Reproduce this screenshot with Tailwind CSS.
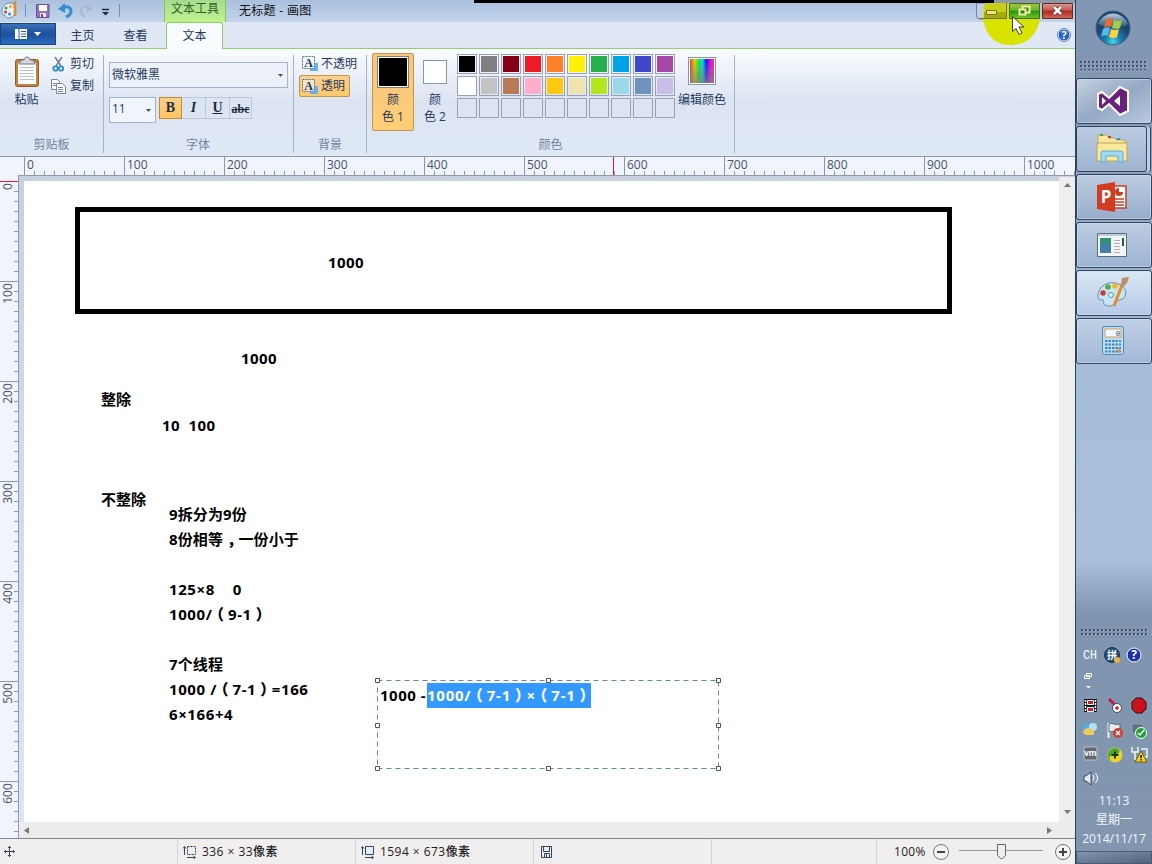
<!DOCTYPE html>
<html lang="zh-CN">
<head>
<meta charset="utf-8">
<title>无标题 - 画图</title>
<script src="https://cdn.jsdelivr.net/npm/@tailwindcss/browser@4"></script>
</head>
<body class="w-[1152px] h-[864px] overflow-hidden flex font-['Open_Sans','Noto_Sans_CJK_SC',sans-serif] text-[12px] text-[#26395c] leading-4">

<main class="relative w-[1075px] h-full flex flex-col shrink-0 bg-[#dde6f3]">
  <!-- Title bar -->
  <header class="h-[22px] shrink-0 flex bg-linear-to-b from-[#a9c0de] to-[#c3d5ea]">
    <div class="w-[164px] shrink-0">
      <svg width="164" height="22" fill="none">
        <path d="M2 11c0-5 4-8 8-8 3 0 5 2 4 4-1 1 2 2 2 4 0 4-4 7-8 7-3 0-2-3-4-3S2 13 2 11z" fill="#e4f0f7" stroke="#5b93ad"/>
        <circle cx="6" cy="8" r="1.5" fill="#4a9b46"/><circle cx="10.500" cy="6.500" r="1.500" fill="#e7ab31"/><circle cx="5.500" cy="12" r="1.500" fill="#c23f49"/><circle cx="9.500" cy="14" r="1.500" fill="#3b87c7"/>
        <path d="M15 1v15" stroke="#e28a2c" stroke-width="2.500"/>
        <path d="M25.500 4v13M119.500 4v13" stroke="#7890b0"/>
        <path d="M36.500 4.500h12.500v13H36.500z" fill="#9474b8" stroke="#6c4f93"/><path d="M39 5h8v6h-8z" fill="#fff"/><path d="M40 13h6v4h-6z" fill="#e9e3f3"/><path d="M41 14h2v3h-2z" fill="#6c4f93"/>
        <path d="M62 8c6-3 9 0 9 3s-2 5-5 6" stroke="#368dd0" stroke-width="3"/><path d="M58 9l7-6v10z" fill="#368dd0"/>
        <path d="M89 8c-6-3-8 0-8 3s2 5 4 6" stroke="#a9bad0" stroke-width="2.500"/><path d="M93 9l-6-6v9z" fill="#a9bad0"/>
        <path d="M102 9.500h7" stroke="#1f2a3c" stroke-width="1.500"/><path d="M102 12h7l-3.500 3.500z" fill="#1f2a3c"/>
      </svg>
    </div>
    <div class="w-[62px] h-[22px] flex justify-center pt-[1px] border-x border-[#87c559] bg-linear-to-b from-[#a4dc8c] to-[#c0f28e] text-[#35602f] whitespace-nowrap">文本工具</div>
    <div class="pl-[13px] pt-[3px] text-[#111] whitespace-nowrap tracking-[0.300px]">无标题 - 画图</div>
  </header>
  <!-- Tabs -->
  <nav class="h-[27px] shrink-0 flex border-b border-[#93d16b] bg-[#dfe8f4] text-[12px]">
    <div class="w-[56px] h-[22px] mt-px flex items-center justify-center bg-linear-to-b from-[#3a72b8] via-[#1d509b] to-[#2a6bbd] border border-[#1a4382]">
      <svg width="28" height="12"><path d="M1 1h12v10H1z" fill="#fff"/><path d="M5 1v10M7 3.500h5M7 6h5M7 8.500h5" stroke="#2a5ca5"/><path d="M20 4h7l-3.500 4z" fill="#fff"/></svg>
    </div>
    <div class="w-[53px] pt-[6px] text-center">主页</div>
    <div class="w-[53px] pt-[6px] text-center">查看</div>
    <div class="ml-[4px] w-[57px] h-[27px] pt-[5px] text-center rounded-t-[3px] border border-b-0 border-[#8bcb60] bg-[#f9fcfe]">文本</div>
    <div class="grow flex justify-end pt-[6px] pr-[4px]">
      <svg width="14" height="14"><circle cx="7" cy="7" r="6" fill="#2b63c6" stroke="#fff"/><circle cx="7" cy="7" r="6.500" fill="none" stroke="#6085bf"/><text x="7" y="11" text-anchor="middle" font-size="11" font-weight="700" fill="#fff">?</text></svg>
    </div>
  </nav>
  <!-- Ribbon -->
  <section class="h-[107px] shrink-0 flex bg-linear-to-b from-[#f9fcfe] via-[#dce4f2] to-[#dfe8f5] border-b border-[#dfe9f6]">
    <div class="w-[104px] h-[98px] mt-[6px] border-r border-[#a7b4c8] flex flex-col justify-between">
      <div class="flex">
        <div class="w-[51px] flex flex-col items-center pl-[2px]">
          <svg width="26" height="34" class="mt-[1px]" fill="none"><rect x="1.500" y="3.500" width="23" height="27" rx="2" fill="#bf8340" stroke="#925c27"/><path d="M4 7h18v21H4z" fill="#fdfdfd"/><path d="M7 4h3c0-4 6-4 6 0h3l2 4H5z" fill="#d4d8dd" stroke="#73787f"/><path d="M6 11.500h14M6 14.500h14M6 17.500h14M6 20.500h14M6 23.500h14" stroke="#b9bfc8"/></svg>
          <div class="mt-[2px]">粘贴</div>
        </div>
        <div class="flex flex-col gap-[6px] pt-px">
          <div class="flex gap-[3px] items-center"><svg width="16" height="16" fill="none"><path d="M4 1l6 9M11 1L5 10" stroke="#6c8097" stroke-width="1.500"/><circle cx="4.500" cy="12.500" r="2.200" stroke="#2f8bc7" stroke-width="1.800"/><circle cx="10" cy="12.500" r="2.200" stroke="#2f8bc7" stroke-width="1.800"/></svg>剪切</div>
          <div class="flex gap-[3px] items-center"><svg width="16" height="16" fill="#fff" stroke="#75889f"><path d="M.5 1.500h6l2 2v8h-8z"/><path d="M2 5.500h4M2 7.500h4"/><path d="M5.500 5.500h6l3 3v7h-9z"/><path d="M7 9.500h5M7 11.500h5M7 13.500h5"/></svg>复制</div>
        </div>
      </div>
      <div class="text-center text-[#7484a1]">剪贴板</div>
    </div>
    <div class="w-[190px] h-[98px] mt-[6px] border-r border-[#a7b4c8] flex flex-col pl-[5px]">
      <div class="mt-[7px] w-[179px] h-[26px] border border-[#a2b4cf] bg-[#edf2fa] flex items-center justify-between pl-[2px] pr-[4px]"><span class="-mt-px">微软雅黑</span><svg width="5" height="3"><path d="M0 0h5l-2.500 3z" fill="#45526a"/></svg></div>
      <div class="flex mt-[9px]">
        <div class="w-[47px] h-[26px] border border-[#a2b4cf] bg-[#f0f4fb] flex items-center justify-between pl-[3px] pr-[4px]"><span class="-mt-[2px] -ml-px">11</span><svg width="5" height="3"><path d="M0 0h5l-2.500 3z" fill="#45526a"/></svg></div>
        <div class="ml-[3px] flex h-[22px] font-['Liberation_Serif',serif] font-bold text-[14px] leading-[19px] text-center text-[#1d2b42]">
          <div class="w-[23px] border border-[#bd8e3a] bg-linear-to-b from-[#fbd08a] to-[#ffc65e]">B</div>
          <div class="w-[24px] border-y border-r border-[#bbc8dd] italic">I</div>
          <div class="w-[24px] border-y border-r border-[#bbc8dd] underline">U</div>
          <div class="w-[22px] border-y border-r border-[#bbc8dd] line-through text-[12px] leading-[22px]">abc</div>
        </div>
      </div>
      <div class="mt-auto pr-[6px] text-center text-[#7484a1]">字体</div>
    </div>
    <div class="w-[73px] h-[98px] mt-[6px] border-r border-[#a7b4c8] flex flex-col pl-[5px]">
      <div class="h-[20px] w-[62px] flex items-center gap-[3px] pl-[3px] pb-[3px] whitespace-nowrap"><svg width="16" height="15" class="shrink-0"><path d="M8 7h8v8H8z" fill="#65b3f5"/><path d="M.5.500h12v12H.5z" fill="#f5f9fd" stroke="#56729a" stroke-dasharray="2 1"/><text x="6.500" y="11" text-anchor="middle" font-family="Liberation Serif" font-size="12" font-weight="700" fill="#1d3557">A</text></svg>不透明</div>
      <div class="h-[22px] w-[51px] flex items-center gap-[3px] pl-[2px] rounded-[2px] border border-[#c2964b] bg-linear-to-b from-[#fad18f] to-[#ffc86b] whitespace-nowrap"><svg width="16" height="15" class="shrink-0"><path d="M8 7h8v8H8z" fill="#65b3f5"/><path d="M.5.500h12v12H.5z" fill="#f5e6c8" stroke="#56729a" stroke-dasharray="2 1"/><text x="6.500" y="11" text-anchor="middle" font-family="Liberation Serif" font-size="12" font-weight="700" fill="#1d3557">A</text></svg>透明</div>
      <div class="mt-auto pr-[5px] text-center text-[#7484a1]">背景</div>
    </div>
    <div class="w-[368px] h-[98px] mt-[6px] border-r border-[#a7b4c8] flex flex-col">
      <div class="flex pl-[5px]">
        <div class="-mt-[2px] w-[42px] h-[78px] rounded-[2px] border border-[#c2964b] bg-linear-to-b from-[#f5c581] to-[#ffcf76] flex flex-col items-center pt-[2px]">
          <div class="size-[32px] border border-[#8d7960] bg-white p-[1px]"><div class="size-full bg-black"></div></div>
          <div class="text-center leading-[17px] mt-[3px]">颜<br>色 1</div>
        </div>
        <div class="w-[42px] flex flex-col items-center pt-[5px]">
          <div class="size-[24px] border border-[#8896ab] bg-white"></div>
          <div class="text-center leading-[17px] mt-[7px]">颜<br>色 2</div>
        </div>
        <div class="grid grid-cols-10 gap-[2px] self-start -mt-px ml-[1px] *:size-[20px] *:border *:border-[#99a2b3]">
          <i class="bg-black bg-clip-content p-px"></i><i class="bg-[#7f7f7f] bg-clip-content p-px"></i><i class="bg-[#880015] bg-clip-content p-px"></i><i class="bg-[#ed1c24] bg-clip-content p-px"></i><i class="bg-[#ff7f27] bg-clip-content p-px"></i><i class="bg-[#fff200] bg-clip-content p-px"></i><i class="bg-[#22b14c] bg-clip-content p-px"></i><i class="bg-[#00a2e8] bg-clip-content p-px"></i><i class="bg-[#3f48cc] bg-clip-content p-px"></i><i class="bg-[#a349a4] bg-clip-content p-px"></i>
          <i class="bg-white"></i><i class="bg-[#c3c3c3] bg-clip-content p-px"></i><i class="bg-[#b97a57] bg-clip-content p-px"></i><i class="bg-[#ffaec9] bg-clip-content p-px"></i><i class="bg-[#ffc90e] bg-clip-content p-px"></i><i class="bg-[#efe4b0] bg-clip-content p-px"></i><i class="bg-[#b5e61d] bg-clip-content p-px"></i><i class="bg-[#99d9ea] bg-clip-content p-px"></i><i class="bg-[#7092be] bg-clip-content p-px"></i><i class="bg-[#c8bfe7] bg-clip-content p-px"></i>
          <i></i><i></i><i></i><i></i><i></i><i></i><i></i><i></i><i></i><i></i>
        </div>
        <div class="w-[54px] flex flex-col items-center pt-[2px] whitespace-nowrap">
          <div class="size-[28px] border border-[#8896ab] bg-white p-px"><div class="size-full bg-[linear-gradient(to_bottom,transparent,#808080c0),linear-gradient(to_right,#f33,#dd0_20%,#0e3_38%,#0de_52%,#11f_68%,#e0e_85%,#f36)]"></div></div>
          <div class="mt-[7px]">编辑颜色</div>
        </div>
      </div>
      <div class="mt-auto text-center text-[#7484a1]">颜色</div>
    </div>
  </section>
  <!-- Horizontal ruler -->
  <svg class="h-[20px] w-full shrink-0 bg-[#f1f5fb]" font-family="Open Sans" font-size="12" fill="#44546f">
    <defs><pattern id="hx" x="24" y="0" width="10" height="20" patternUnits="userSpaceOnUse"><path d="M.5 15v4" stroke="#8a97ad"/></pattern><pattern id="hm" x="24" y="0" width="100" height="20" patternUnits="userSpaceOnUse"><path d="M.5 1v18" stroke="#8a97ad"/></pattern></defs>
    <rect x="24" width="1051" height="20" fill="url(#hx)"/><rect x="24" width="1051" height="20" fill="url(#hm)"/>
    <path d="M0 .5h1075M18 19.500h1057" stroke="#8f9bb0"/><rect x="613" y="1" width="1" height="18" fill="#d11d36"/>
    <text x="27" y="13">0</text><text x="127" y="13">100</text><text x="227" y="13">200</text><text x="327" y="13">300</text><text x="427" y="13">400</text><text x="527" y="13">500</text><text x="627" y="13">600</text><text x="727" y="13">700</text><text x="827" y="13">800</text><text x="927" y="13">900</text><text x="1027" y="13">1000</text>
  </svg>
  <!-- Work area -->
  <section class="h-[662px] shrink-0 flex">
    <svg class="w-[19px] h-full shrink-0 bg-[#f1f5fb]" font-family="Open Sans" font-size="12" fill="#44546f" text-anchor="middle">
      <defs><pattern id="vx" x="0" y="5" width="19" height="10" patternUnits="userSpaceOnUse"><path d="M14 .5h4" stroke="#8a97ad"/></pattern><pattern id="vm" x="0" y="5" width="19" height="100" patternUnits="userSpaceOnUse"><path d="M0 .5h18" stroke="#8a97ad"/></pattern></defs>
      <rect y="5" width="19" height="657" fill="url(#vx)"/><rect y="5" width="19" height="657" fill="url(#vm)"/>
      <path d="M18.500 0v662" stroke="#8f9bb0"/><rect y="5" width="18" height="1" fill="#d11d36"/>
      <text transform="translate(12 10.500) rotate(-90)">0</text><text transform="translate(12 117.500) rotate(-90)">100</text><text transform="translate(12 217.500) rotate(-90)">200</text><text transform="translate(12 317.500) rotate(-90)">300</text><text transform="translate(12 417.500) rotate(-90)">400</text><text transform="translate(12 517.500) rotate(-90)">500</text><text transform="translate(12 617.500) rotate(-90)">600</text>
    </svg>
    <div class="w-[1056px] flex flex-col bg-linear-to-b from-[#c8d0df] to-[#dfe5f4]">
      <div class="h-[646px] flex">
        <!-- Drawing canvas: texts and shapes sit at free positions; punctuation is centred in its full-width cell -->
        <div class="relative ml-[5px] mt-[5px] w-[1035px] bg-white font-bold text-[15px] leading-[25px] tracking-[0.400px] text-black whitespace-pre [&_b]:inline-block [&_b]:w-[15.5px] [&_b]:text-center [&_b]:tracking-normal [&_b]:[font-feature-settings:'halt']">
          <div class="absolute left-[51px] top-[26px] w-[877px] h-[107px] border-5 border-black"></div>
          <div class="absolute left-[304px] top-[69px]">1000</div>
          <div class="absolute left-[217px] top-[165px]">1000</div>
          <div class="absolute left-[77px] top-[206px] tracking-normal">整除</div>
          <div class="absolute left-[138px] top-[232px]">10  100</div>
          <div class="absolute left-[77px] top-[306px] tracking-normal">不整除</div>
          <div class="absolute left-[145px] top-[321px] tracking-[0.100px]">9拆分为9份
8份相等<b>，</b>一份小于

<span class="tracking-[0.600px]">125×8    0
1000/<b>（</b>9-1<b>）</b></span>

7个线程
<span class="tracking-[0.600px]">1000 /<b>（</b>7-1<b>）</b>=166
6×166+4</span></div>
          <div class="absolute left-[353px] top-[499px] w-[342px] h-[89px] whitespace-normal">
            <svg class="absolute inset-0" width="342" height="89" fill="none"><path d="M.5.500h341v88H.5z" stroke="#5c88b2" stroke-dasharray="5 4"/></svg>
            <div class="flex pl-[3px] pt-[3px] relative whitespace-pre"><span class="w-[47px] tracking-[0.500px]">1000 -</span><span class="bg-[#3399ff] text-white w-[164px] h-[25px] tracking-[0.750px]">1000/<b>（</b>7-1<b>）</b>×<b>（</b>7-1<b>）</b></span></div>
            <svg class="absolute -left-[2px] -top-[2px]" width="346" height="93" fill="#fff" stroke="#4c5663"><path d="M.5.500h4v4h-4zM171.500.500h4v4h-4zM341.500.500h4v4h-4zM.5 45.500h4v4h-4zM341.500 45.500h4v4h-4zM.5 88.500h4v4h-4zM171.500 88.500h4v4h-4zM341.500 88.500h4v4h-4z"/></svg>
          </div>
        </div>
        <div class="w-[16px] mt-px bg-[#eeeeef] flex flex-col justify-between items-center pt-[6px] pb-[8px]">
          <svg width="7" height="4"><path d="M0 4h7L3.500 0z" fill="#777"/></svg><svg width="7" height="4"><path d="M0 0h7L3.500 4z" fill="#777"/></svg>
        </div>
      </div>
      <div class="h-[16px] bg-[#ececec] flex justify-between items-center pl-[5px] pr-[23px]">
        <svg width="5" height="7"><path d="M5 0v7L0 3.500z" fill="#777"/></svg><svg width="5" height="7"><path d="M0 0v7l5-3.500z" fill="#777"/></svg>
      </div>
    </div>
  </section>
  <!-- Status bar -->
  <footer class="h-[26px] shrink-0 flex border-t border-[#83878c] bg-[#f0eeee] text-[#1c1c1c] whitespace-nowrap *:border-r *:border-[#d4d4d6] *:flex *:items-center">
    <div class="w-[178px] pl-[4px]"><svg width="11" height="11" fill="none" stroke="#31475f"><path d="M5.500 0v11M0 5.500h11M4 2l1.500-1.500L7 2M4 9l1.500 1.500L7 9M2 4L.5 5.500 2 7M9 4l1.500 1.500L9 7"/></svg></div>
    <div class="w-[178px] pl-[5px] gap-[5px] tracking-[0.450px]"><svg width="14" height="14" fill="none" stroke="#31475f"><path d="M4.500 1.500h8v8h-8z" stroke-dasharray="2 1"/><path d="M1.500 2v8M0 3.500l1.500-2 1.500 2M4 12.500h8M10.500 11l2 1.500-2 1.500"/></svg><span>336 × 33<span class="font-medium">像素</span></span></div>
    <div class="w-[178px] pl-[5px] gap-[5px] tracking-[0.450px]"><svg width="14" height="14" fill="none" stroke="#31475f"><path d="M4.500 1.500h8v8h-8z" fill="#e3effc"/><path d="M1.500 2v8M0 3.500l1.500-2 1.500 2M4 12.500h8M10.500 11l2 1.500-2 1.500"/></svg><span>1594 × 673<span class="font-medium">像素</span></span></div>
    <div class="w-[178px] pl-[7px]"><svg width="12" height="12" fill="none" stroke="#31475f"><path d="M.5.500h10v11h-10zM2.500.500v5h6v-5M3.500 11.500v-4h5v4M5.500 8v3"/></svg></div>
    <div class="w-[165px]"></div>
    <div class="w-[198px] border-r-0! pl-[17px]"><span class="w-[38px] shrink-0 tracking-[0.300px]">100%</span>
      <svg width="140" height="22" fill="none"><circle cx="9" cy="11" r="7.500" fill="#f3f3f3" stroke="#777"/><path d="M5 11h8" stroke="#444" stroke-width="2"/><path d="M27 9.500h84" stroke="#999"/><path d="M65.500 3.500h8v11l-3 3h-2l-3-3z" fill="#eee" stroke="#666"/><circle cx="131" cy="11" r="7.500" fill="#f3f3f3" stroke="#777"/><path d="M127 11h8M131 7v8" stroke="#444" stroke-width="2"/></svg>
    </div>
  </footer>

  <!-- Window buttons, pointer highlight and pointer -->
  <svg class="absolute left-[970px] top-0" width="105" height="48" fill="none">
    <defs><linearGradient id="rd" x2="0" y2="1"><stop stop-color="#d99a92"/><stop offset=".45" stop-color="#c6584d"/><stop offset=".5" stop-color="#ab2a20"/><stop offset="1" stop-color="#cf6958"/></linearGradient><linearGradient id="gn" x2="0" y2="1"><stop stop-color="#a6c43a"/><stop offset=".45" stop-color="#66b52a"/><stop offset=".5" stop-color="#239313"/><stop offset="1" stop-color="#73c91f"/></linearGradient></defs>
    <path d="M6.500 3v13q0 3 3 3h27V3z" fill="#bfd0e4" stroke="#71839e"/>
    <path d="M15 3C10 17 14 45 41 45S73 18 69 3z" fill="#d8e400"/>
    <path d="M15 3h22v15H14z" fill="#c7cf1a"/><path d="M14 12h22v6H14z" fill="#a5ac13"/><path d="M36.500 3v15.500h-27" stroke="#6d741c"/>
    <path d="M39.500 3.500h30v15h-30z" fill="url(#gn)" stroke="#3c6b24"/>
    <path d="M72.500 3.500h30v15h-30z" fill="url(#rd)" stroke="#6b2822"/>
    <path d="M16.500 10.500h10v4h-10z" fill="#ece96d" stroke="#777a20"/>
    <path d="M52.500 6.500h7v6h-7z" fill="#357c18" stroke="#eff0a1" stroke-width="2"/><path d="M49.500 9.500h6v5h-6z" fill="#357c18" stroke="#eff0a1" stroke-width="2"/>
    <path d="M84 7l7 7M91 7l-7 7" stroke="#6b2822" stroke-width="4"/><path d="M84 7l7 7M91 7l-7 7" stroke="#fff" stroke-width="2.500"/>
    <path d="M42.500 16.500v15l3.500-3 3 6 3-1.500-3-6h5z" fill="#fff" stroke="#3d4517"/>
  </svg>
  <div class="absolute left-[474px] top-0 w-[520px] h-[3px] bg-black"></div>
  <div class="absolute left-[994px] top-0 w-[81px] h-[3px] bg-[#8b9aa6]"></div>
</main>

<!-- Taskbar -->
<aside class="w-[77px] h-full shrink-0 flex flex-col border-l border-[#2c4059] bg-[linear-gradient(to_bottom,#8197b3_0,#8197b3_80px,#a5bcda_360px,#a9bfdd_560px,#7f94ae_615px,#8297af_850px)]">
  <div class="h-[78px] flex flex-col">
    <svg width="76" height="78">
      <defs><radialGradient id="orb" cy=".9"><stop stop-color="#49d5ef"/><stop offset=".45" stop-color="#1c7fae"/><stop offset="1" stop-color="#1b4873"/></radialGradient><linearGradient id="gl" x2="0" y2="1"><stop stop-color="#e6eff5" stop-opacity=".8"/><stop offset="1" stop-color="#b0d0e0" stop-opacity=".1"/></linearGradient>
      <pattern id="dots" width="4" height="4" patternUnits="userSpaceOnUse"><path d="M0 1h2v2H0z" fill="#3f5067"/><path d="M2 2h1v1H2z" fill="#c1cede"/></pattern></defs>
      <circle cx="37" cy="28" r="17" fill="url(#orb)" stroke="#405f7d"/><path d="M22 24a16 16 0 0 1 30 0c-9 5-21 5-30 0z" fill="url(#gl)"/>
      <g transform="translate(1 0)"><path d="M29 20q4-3 7-1l-2 8q-4-2-7 1z" fill="#ee6a2c"/><path d="M37 20q4 2 8 0l-2 8q-4 2-8 0z" fill="#a2ce43"/><path d="M26 29q4-3 7-1l-2 8q-4-2-7 1z" fill="#55b9ed"/><path d="M34 29q4 2 8 0l-2 8q-4 2-8 0z" fill="#ffd246"/></g>
      <rect x="4" y="60" width="68" height="10" fill="url(#dots)"/>
    </svg>
  </div>
  <div class="flex flex-col gap-[2px] *:w-[76px] *:h-[46px] *:border *:border-[#33465f] *:rounded-[3px] *:flex *:items-center *:pl-[19px] *:shadow-[inset_0_0_0_1px_#cfdeed99]">
    <div class="bg-linear-to-br from-[#c6d2e2] via-[#94a9c4] to-[#b9cadf]"><svg width="34" height="32"><path d="M2 9l4-2 7 6L24 2l8 4v20l-8 4-11-11-7 6-4-2z" fill="#68217a" stroke="#fff" stroke-width="2"/><path d="M6 12v8l4-4zM24 11v10l-6-5z" fill="#fff"/></svg></div>
    <div class="w-[71px]! pl-[18px]! bg-linear-to-b from-[#bccde2] to-[#9db3d0] shadow-[3px_0_0_#bed0e5,4px_0_0_#33465f]!"><svg width="34" height="32" stroke="#c1a554"><path d="M3 6V2h9l2 3h6l1 2h9v4H3z" fill="#f7e8a1"/><path d="M2 10h30v18H2z" fill="#f9e79b"/><path d="M5 2h3" stroke="#38a447" stroke-width="2"/><path d="M13 4h3" stroke="#c64034" stroke-width="2"/><path d="M22 6h3" stroke="#3290ca" stroke-width="2"/><path d="M6 29v-9q0-2 2-2h18q2 0 2 2v9h-5v-6H11v6z" fill="#9bdaf0" stroke="#66abcb"/></svg></div>
    <div class="bg-linear-to-b from-[#bdcde1] to-[#96adcb]"><svg width="32" height="32"><path d="M16 5h14v22H16z" fill="#fff" stroke="#ca3d24" stroke-width="1.500"/><path d="M19 18h9M19 21h9M19 24h9" stroke="#ca3d24" stroke-width="1.500"/><circle cx="23" cy="11" r="4" fill="#ca3d24"/><path d="M23 11V6q5 0 5 5z" fill="#fff"/><path d="M1 4l18-3v30L1 28z" fill="#d33b20"/><text x="10" y="22" text-anchor="middle" font-family="Open Sans" font-weight="700" font-size="17" fill="#fff">P</text></svg></div>
    <div class="bg-linear-to-b from-[#bdcde1] to-[#9cb4d4]"><svg width="32" height="28"><path d="M1.500 2.500h29v23h-29z" fill="#f3f6f7" stroke="#566f7c"/><path d="M2 3h28v2H2z" fill="#bdcbd7"/><path d="M4 7h11v15H4z" fill="#318f73"/><path d="M4 15l5-5 6 5v7H4z" fill="#467eab"/><path d="M18 9.500h6M18 12.500h6M18 15.500h6M18 18.500h6M18 21.500h6" stroke="#bdabb5"/><path d="M27 7v8" stroke="#2e564d" stroke-width="2"/></svg></div>
    <div class="bg-linear-to-b from-[#dbe7f5] to-[#b4cae6]"><svg width="34" height="34" fill="none"><path d="M2 21C1 12 10 5 19 7c7 1 13 7 10 13-2 5-7 3-9 6-2 4-7 5-11 3-3-1 0-4-2-5s-5 1-5-3z" fill="#c7e5ef" stroke="#5a91ac"/><circle cx="7" cy="17" r="2.800" fill="#c8403d"/><circle cx="12" cy="11" r="2.800" fill="#55ac40"/><circle cx="19" cy="10" r="2.800" fill="#f2b52b"/><circle cx="15" cy="19" r="2.500" fill="#edf7fd" stroke="#4e91bd"/><path d="M18 30l8-21" stroke="#e48b2b" stroke-width="3"/><path d="M25 9l1-7 7-1-2 6-4 4z" fill="#b98c62"/></svg></div>
    <div class="pl-[23px]! bg-linear-to-b from-[#c0d1e5] to-[#a1b8d8]"><svg width="26" height="32"><rect x="2.500" y="1.500" width="21" height="28" rx="2" fill="#bbdcf2" stroke="#488db9"/><path d="M5 4h16v8H5z" fill="#f1f7fa" stroke="#df9c53"/><text x="18" y="11" text-anchor="middle" font-family="Liberation Mono" font-size="8" fill="#2b5177">0</text><path d="M5 16h16M5 19.500h16M5 23h16M5 26.500h16" stroke="#4389ba" stroke-width="2" stroke-dasharray="2.500 1"/><path d="M19 23v5" stroke="#e9963c" stroke-width="2"/></svg></div>
  </div>
  <svg class="mt-auto shrink-0" width="76" height="163" viewBox="-1 0 76 163" fill="none">
    <rect x="3" y="0" width="68" height="8" fill="url(#dots)"/>
    <text x="6" y="31" font-family="Liberation Mono" font-size="12" textLength="14" lengthAdjust="spacingAndGlyphs" fill="#fff">CH</text>
    <circle cx="35" cy="27" r="7.500" fill="#214d78" stroke="#183456"/><text x="35" y="31" text-anchor="middle" font-family="Noto Sans CJK SC" font-size="10" font-weight="700" fill="#fff">拼</text><circle cx="40" cy="32" r="3" fill="#e8b13c"/>
    <circle cx="57" cy="27" r="7" fill="#1832aa" stroke="#fff"/><text x="57" y="31" text-anchor="middle" font-family="Open Sans" font-size="12" font-weight="700" fill="#fff">?</text>
    <g transform="translate(0 1)">
    <path d="M9.500 44.500h5v3h-5zM7.500 46.500h5v3h-5z" fill="#8297af" stroke="#fff"/><path d="M9 57h5l-2.500 2.500z" fill="#fff"/>
    <path d="M7 70h13v13H7z" fill="#111"/><path d="M8.500 71v12M18.500 71v12" stroke="#fff" stroke-width="1.500" stroke-dasharray="2 1"/><path d="M10.500 71.500h6v4h-6zM10.500 78.500h6v4h-6z" fill="#c91e2c" stroke="#fff"/>
    <path d="M32 70l6 6" stroke="#c6164a" stroke-width="3"/><circle cx="40" cy="79" r="4.500" fill="#fff" stroke="#404a55"/><circle cx="40" cy="79" r="1.800" fill="#d4152c"/>
    <path d="M59 69h6l4 4v7l-4 4h-6l-4-4v-7z" fill="#c8131c" stroke="#390d13"/>
    <circle cx="11" cy="99" r="5" fill="#53aee8"/><circle cx="16" cy="98" r="4" fill="#b9ddf4"/><path d="M6 104c0-6 10-6 11-1v3H9z" fill="#f0ca58"/>
    <path d="M31.500 94v15" stroke="#eee" stroke-width="2"/><path d="M32 95c4-2 6 2 11 0v8c-5 2-7-2-11 0z" fill="#e9ecef" stroke="#586573"/><circle cx="41" cy="104" r="5" fill="#d43d35"/><path d="M39 102l4 4M43 102l-4 4" stroke="#fff" stroke-width="1.500"/>
    <path d="M55 95h11v7l-4 5h-3l-4-5z" fill="#647080" stroke="#929dab"/><circle cx="64" cy="104" r="5.500" fill="#23a136" stroke="#fff"/><path d="M61 104l2 2 4-5" stroke="#fff" stroke-width="1.500"/>
    <path d="M7 118h13v13H7z" fill="#626870" stroke="#bbc1c7"/><text x="13.500" y="127" text-anchor="middle" font-family="Open Sans" font-size="8" font-weight="700" fill="#fff">vm</text>
    <circle cx="38" cy="126" r="7.500" fill="#ebd428"/><path d="M31 126a7 7 0 0 1 7-7c6 0 6 6 0 7-5 0-7 2-4 6q-3-2-3-6z" fill="#4da62c"/><path d="M34.500 126h7M38 122.500v7" stroke="#19370b" stroke-width="2"/>
    <path d="M55 118v5h6v-5M58 123v8M64 120h6v8h-6" stroke="#eff4f8" stroke-width="1.500"/><path d="M64 122l6 11H58z" fill="#f6d31a" stroke="#6d5b0b"/><path d="M64 126v3M64 130v1.500" stroke="#111" stroke-width="1.500"/>
    <path d="M7 147h2l5-4v13l-5-4H7z" fill="#e4eaf0" stroke="#35485c"/><path d="M16 146q2 3 0 6M18.500 144q4 5 0 10" stroke="#fff"/>
    </g>
  </svg>
  <div class="h-[60px] shrink-0 text-center text-[12px] leading-[19px] text-[#f2f6fb] whitespace-nowrap">11:13<br>星期一<br>2014/11/17</div>
  <div class="h-[13px] shrink-0 border border-[#485b74] bg-linear-to-br from-[#8195ad] to-[#50647e]"></div>
</aside>
</body>
</html>
